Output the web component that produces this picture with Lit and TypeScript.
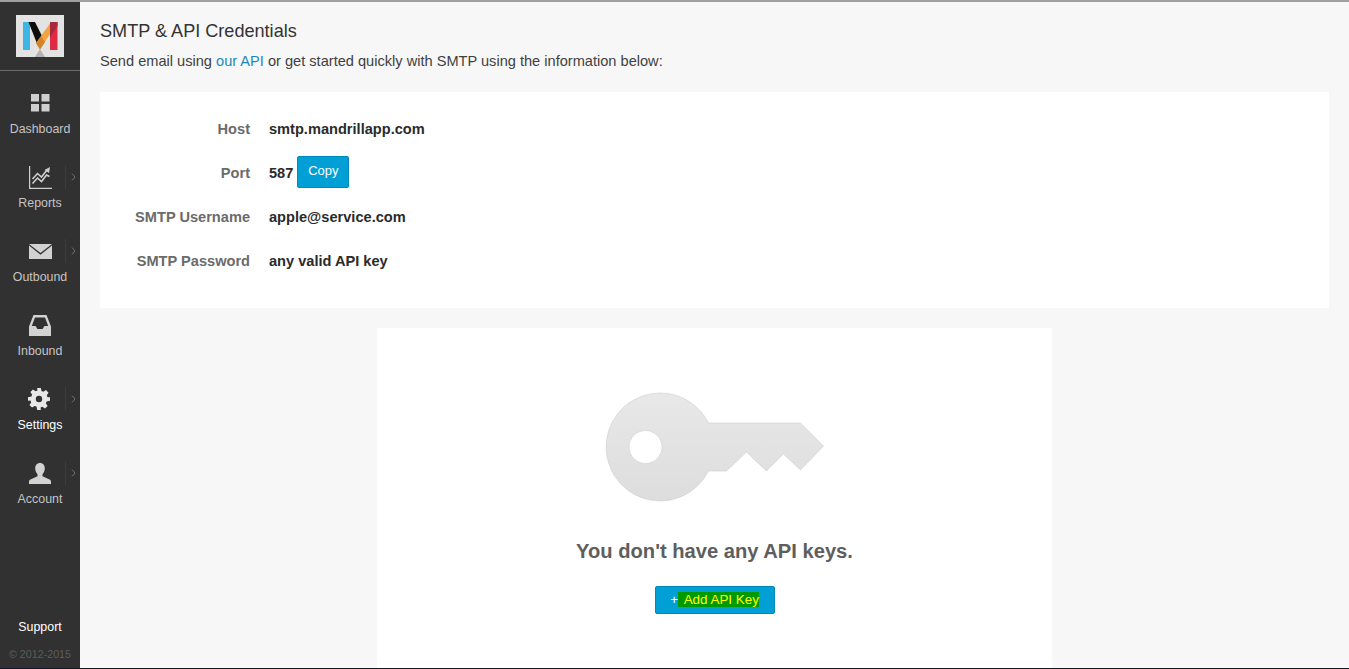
import { LitElement, html, css, svg } from "lit";
import { customElement } from "lit/decorators.js";

const icons: Record<string, unknown> = {
  dashboard: svg`<svg width="19" height="18" viewBox="0 0 19 18"><g fill="#cfcfcf"><rect x="0" y="0" width="8" height="7.500"/><rect x="10.500" y="0" width="8" height="7.500"/><rect x="0" y="10" width="8" height="7.500"/><rect x="10.500" y="10" width="8" height="7.500"/></g></svg>`,
  reports: svg`<svg width="23" height="23" viewBox="0 0 23 23" fill="none" stroke="#cfcfcf"><path d="M.6 0v22.400H23" stroke-width="1.200"/><path d="M3.500 17.500l5-5.500 4 3.500 5-6.500 3 1.500M3.500 13l5-5.500 4 3.500 5.500-7" stroke-width="1.600"/><path d="M21 1l-1 6-4.500-3z" fill="#cfcfcf" stroke="none"/></svg>`,
  outbound: svg`<svg width="23" height="15" viewBox="0 0 23 15"><path d="M0 0h23L11.500 9z" fill="#d2d2d2"/><path d="M0 1.500V15h23V1.500L11.500 10.800z" fill="#d2d2d2"/></svg>`,
  inbound: svg`<svg width="22" height="21" viewBox="0 0 22 21"><path fill-rule="evenodd" d="M4.500 0h13L22 11.500V21H0v-9.500zM6 2.500L2.800 11H6.500l2 3h5l2-3h3.700L16 2.500z" fill="#d2d2d2"/></svg>`,
  settings: svg`<svg width="22" height="22" viewBox="0 0 24 24"><path fill-rule="evenodd" fill="#e8e8e8" d="M10 0h4l.7 3.400 2 .8 2.900-1.900 2.800 2.800-1.900 2.900.8 2L24 10v4l-3.700.7-.8 2 1.900 2.900-2.800 2.800-2.900-1.900-2 .8L14 24h-4l-.7-3.700-2-.8-2.900 1.900-2.800-2.800 1.900-2.900-.8-2L0 14v-4l3.700-.7.8-2-1.900-2.900 2.800-2.800 2.900 1.900 2-.8zM12 8.500a3.500 3.500 0 1 0 0 7 3.500 3.500 0 0 0 0-7z"/></svg>`,
  account: svg`<svg width="22" height="21" viewBox="0 0 22 21"><path fill="#d2d2d2" d="M11 0c3 0 4.800 2.200 4.800 5.300 0 2.400-1 4.700-2.300 6v2l7 3.200c.9.400 1.500 1.200 1.500 2.200V21H0v-2.300c0-1 .6-1.800 1.500-2.200l7-3.200v-2c-1.300-1.300-2.300-3.600-2.300-6C6.200 2.200 8 0 11 0z"/></svg>`,
};

const nav = [
  { id: "dashboard", label: "Dashboard", arrow: false, active: false },
  { id: "reports", label: "Reports", arrow: true, active: false },
  { id: "outbound", label: "Outbound", arrow: true, active: false },
  { id: "inbound", label: "Inbound", arrow: false, active: false },
  { id: "settings", label: "Settings", arrow: true, active: true },
  { id: "account", label: "Account", arrow: true, active: false },
];

const creds = [
  { k: "Host", v: "smtp.mandrillapp.com", copy: false },
  { k: "Port", v: "587", copy: true },
  { k: "SMTP Username", v: "apple@service.com", copy: false },
  { k: "SMTP Password", v: "any valid API key", copy: false },
];

@customElement("app-root")
export class AppRoot extends LitElement {
  static styles = css`
    :host {
      display: flex;
      flex-direction: column;
      height: 669px;
      overflow: hidden;
      font-family: "Liberation Sans", Arial, sans-serif;
      background: #f7f7f7;
      color: #333;
    }
    .topline { height: 2px; flex: none; background: #a0a0a0; }
    .shell { flex: 1; min-height: 0; display: flex; }
    .bottomline { height: 1px; flex: none; background: #14192a; }
    .side {
      width: 80px; flex: none; background: #313131;
      display: flex; flex-direction: column; align-items: stretch;
    }
    .logo-wrap {
      height: 69px; flex: none; border-bottom: 1px solid #6a6a6a;
      display: flex; justify-content: center; padding-top: 13px; box-sizing: border-box;
    }
    .logo { width: 48px; height: 42px; display: block; }
    .nav { display: flex; flex-direction: column; }
    .item {
      height: 74px; position: relative; display: flex; flex-direction: column;
      align-items: center; color: #c4c4c4; font-size: 12.4px;
    }
    .item.active { color: #fff; }
    .ico { height: 38px; margin-top: 13px; display: flex; align-items: center; justify-content: center; }
    .ico.settings { margin-left: -2px; }
    .lbl { line-height: 14px; }
    .chev {
      position: absolute; left: 65px; top: 20px; height: 24px; width: 15px;
      border-left: 1px solid #3c3c3c; box-sizing: border-box;
    }
    .chev svg { position: absolute; left: 5px; top: 8px; }
    .grow { flex: 1; }
    .support { color: #fff; font-size: 12.4px; text-align: center; line-height: 14px; }
    .copy-note { color: #5c5c5c; font-size: 10.7px; text-align: center; line-height: 12px; margin: 14px 0 8px; white-space: nowrap; }
    .main { flex: 1; min-width: 0; padding: 0 20px; display: flex; flex-direction: column; }
    h1 { margin: 18px 0 0; font-weight: 400; font-size: 18.100px; line-height: 22px; color: #333; }
    .sub { margin: 9px 0 0; font-size: 14.600px; line-height: 20px; color: #3f3f3f; }
    a { color: #1e87b8; text-decoration: none; }
    .card {
      background: #fff; margin-top: 21px; height: 216px; box-sizing: border-box; padding-top: 14px;
      display: flex; flex-direction: column;
    }
    .row { height: 44px; display: flex; align-items: center; font-size: 14.600px; font-weight: 700; }
    .k { width: 150px; text-align: right; color: #6b6b6b; margin-top: 2px; }
    .v { margin-left: 19px; color: #2b2b2b; margin-top: 2px; }
    .btn {
      background: #00a0d6; border: 1px solid #0089b8; border-radius: 2px; color: #fff;
      font-family: inherit; box-sizing: border-box;
    }
    .copy { width: 52px; height: 32px; margin-left: 4px; padding: 0 0 3px; font-size: 13px; }
    .empty {
      align-self: center; width: 675px; flex: 1; margin-top: 20px; background: #fff;
      display: flex; flex-direction: column; align-items: center;
    }
    .key { margin-top: 64px; display: block; }
    h2 { margin: 36px 0 0; font-size: 20.150px; line-height: 26px; color: #5e5e5e; font-weight: 700; }
    .add { margin-top: 22px; width: 120px; height: 28px; font-size: 13.400px; padding: 0 0 2px; }
    .add mark { background: #009900; color: #ffff00; padding-left: 2px; }
  `;

  render() {
    return html`
      <div class="topline"></div>
      <div class="shell">
        <aside class="side">
          <div class="logo-wrap">
            <svg class="logo" viewBox="0 0 48 42">
              <rect width="48" height="42" fill="#e3e3e3"/>
              <path d="M24 34l5 8H19z" fill="#b4b4b4"/>
              <path d="M7 7h7v28H7z" fill="#3db6e4"/>
              <path d="M12.500 7H19l9 18-6 6z" fill="#0d0d0d"/>
              <path d="M34 8.500L20 28l4 6.500L34 19z" fill="#f3a33f"/>
              <path d="M20 28l4 6.500 5-7.500-4-5.500z" fill="#d0852c"/>
              <path d="M34 7h7.500v28H34z" fill="#de2a42"/>
              <path d="M34 7h7.500v4L34 22z" fill="#a8283d"/>
            </svg>
          </div>
          <nav class="nav">
            ${nav.map(
              (n) => html`
                <div class="item ${n.active ? "active" : ""}">
                  <div class="ico ${n.id}">${icons[n.id]}</div>
                  <div class="lbl">${n.label}</div>
                  ${n.arrow
                    ? html`<div class="chev"><svg width="5" height="8" viewBox="0 0 5 8"><path d="M1 .5L4 4 1 7.500" fill="none" stroke="#707070" stroke-width="1"/></svg></div>`
                    : ""}
                </div>
              `
            )}
          </nav>
          <div class="grow"></div>
          <div class="support">Support</div>
          <div class="copy-note">© 2012-2015</div>
        </aside>
        <main class="main">
          <h1>SMTP &amp; API Credentials</h1>
          <p class="sub">Send email using <a href="#">our API</a> or get started quickly with SMTP using the information below:</p>
          <section class="card">
            ${creds.map(
              (c) => html`
                <div class="row">
                  <div class="k">${c.k}</div>
                  <div class="v">${c.v}</div>
                  ${c.copy ? html`<button class="btn copy">Copy</button>` : ""}
                </div>
              `
            )}
          </section>
          <section class="empty">
            <svg class="key" width="220" height="110" viewBox="0 0 220 110">
              <defs>
                <linearGradient id="kg" x1="0" y1="0" x2="0" y2="1">
                  <stop offset="0" stop-color="#e8e8e8"/>
                  <stop offset="1" stop-color="#dddddd"/>
                </linearGradient>
              </defs>
              <path fill="url(#kg)" stroke="#cfcfcf" stroke-width="0.600" fill-rule="evenodd"
                d="M54.500 1A54 54 0 0 1 103.500 31H195.500L218.500 54 195.500 78 178.500 62 161.500 79 141.500 60 121.500 79H103.500A54 54 0 1 1 54.500 1ZM40.500 38.500A16.500 16.500 0 1 0 40.500 71.500 16.500 16.500 0 1 0 40.500 38.500Z"/>
            </svg>
            <h2>You don't have any API keys.</h2>
            <button class="btn add">+<mark>&nbsp;Add API Key</mark></button>
          </section>
        </main>
      </div>
      <div class="bottomline"></div>
    `;
  }
}
